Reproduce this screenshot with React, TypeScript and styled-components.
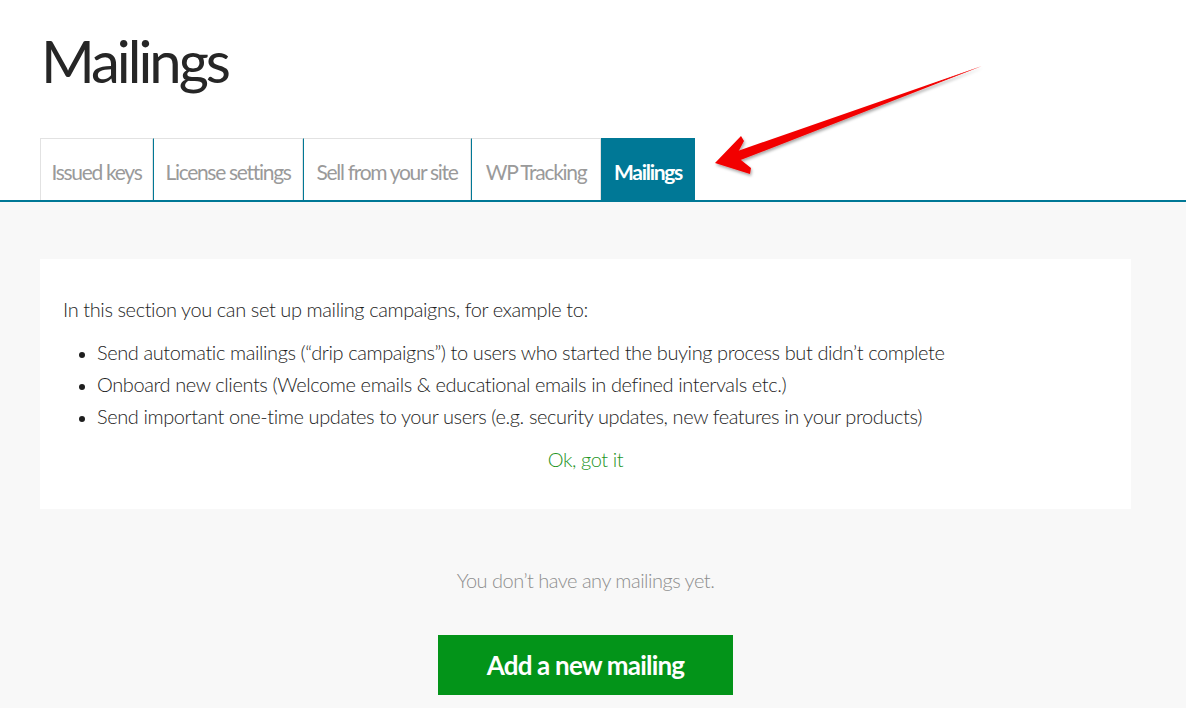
import React from "react";
import styled, { createGlobalStyle } from "styled-components";

const Global = createGlobalStyle`
  html, body { margin: 0; padding: 0; background: #ffffff; }
  body { font-family: Lato, "Open Sans", sans-serif; color: #222; }
  * { box-sizing: border-box; }
`;

const Page = styled.div`
  position: relative;
  width: 1186px;
  min-height: 708px;
  overflow: hidden;
`;

const Header = styled.header`
  padding: 23px 0 0 41px;
  height: 138px;
`;

const Title = styled.h1`
  margin: 0;
  font-size: 58px;
  font-weight: 400;
  letter-spacing: -3px;
  line-height: 76px;
  color: #262626;
`;

const TabBar = styled.nav`
  display: flex;
  padding-left: 40px;
  border-bottom: 2px solid #007896;
`;

const Tab = styled.div<{ $active?: boolean; $w: number }>`
  height: 62px;
  display: flex;
  align-items: center;
  justify-content: center;
  padding-top: 3px;
  width: ${(p) => p.$w}px;
  font-size: 21px;
  letter-spacing: -1.3px;
  font-weight: ${(p) => (p.$active ? 700 : 400)};
  color: ${(p) => (p.$active ? "#ffffff" : "#9a9a9a")};
  background: ${(p) => (p.$active ? "#007896" : "#ffffff")};
  border: 1px solid ${(p) => (p.$active ? "#007896" : "#e2e2e2")};
  border-bottom: none;
  & + & { border-left: ${(p) => (p.$active ? "1px solid #007896" : "none")}; }
`;

const Main = styled.main`
  background: #f8f8f8;
  padding: 57px 55px 20px 40px;
  min-height: 506px;
`;

const InfoCard = styled.section`
  background: #ffffff;
  height: 250px;
  padding: 37px 23px 0 23px;
  font-size: 20px;
  font-weight: 300;
  letter-spacing: -0.4px;
  color: #1e1e1e;
`;

const Intro = styled.p`
  margin: 0 0 14px 0;
  line-height: 26px;
`;

const List = styled.ul`
  margin: 0;
  padding-left: 34px;
  & li { line-height: 32px; }
  & li::marker { font-size: 17px; }
`;

const Dismiss = styled.div`
  margin-top: 15px;
  text-align: center;
  color: #1f951f;
  font-size: 20px;
`;

const Empty = styled.p`
  margin: 59px 0 0;
  text-align: center;
  color: #8e8e8e;
  font-size: 20px;
  font-weight: 300;
  letter-spacing: -0.5px;
`;

const ButtonRow = styled.div`
  display: flex;
  justify-content: center;
  margin-top: 43px;
`;

const AddButton = styled.button`
  width: 295px;
  height: 60px;
  border: none;
  background: #039419;
  color: #ffffff;
  font-family: inherit;
  font-size: 26px;
  font-weight: 700;
  letter-spacing: -0.8px;
  cursor: pointer;
`;

const Arrow = styled.svg`
  position: absolute;
  left: 700px;
  top: 55px;
  pointer-events: none;
`;

const tabs = [
  { label: "Issued keys", w: 113 },
  { label: "License settings", w: 150 },
  { label: "Sell from your site", w: 168 },
  { label: "WP Tracking", w: 130 },
  { label: "Mailings", w: 94, active: true },
];

export default function App() {
  return (
    <Page>
      <Global />
      <Header>
        <Title>Mailings</Title>
      </Header>
      <TabBar>
        {tabs.map((t) => (
          <Tab key={t.label} $active={t.active} $w={t.w}>
            {t.label}
          </Tab>
        ))}
      </TabBar>
      <Main>
        <InfoCard>
          <Intro>In this section you can set up mailing campaigns, for example to:</Intro>
          <List>
            <li>Send automatic mailings (“drip campaigns”) to users who started the buying process but didn’t complete</li>
            <li>Onboard new clients (Welcome emails &amp; educational emails in defined intervals etc.)</li>
            <li>Send important one-time updates to your users (e.g. security updates, new features in your products)</li>
          </List>
          <Dismiss>Ok, got it</Dismiss>
        </InfoCard>
        <Empty>You don’t have any mailings yet.</Empty>
        <ButtonRow>
          <AddButton>Add a new mailing</AddButton>
        </ButtonRow>
      </Main>
      <Arrow width="300" height="130" viewBox="0 0 300 130">
        <defs>
          <filter id="sh" x="-10%" y="-10%" width="120%" height="140%">
            <feDropShadow dx="1" dy="2" stdDeviation="1.5" floodColor="#000" floodOpacity="0.35" />
          </filter>
        </defs>
        <g filter="url(#sh)">
          <path d="M282 11 L36 103 L32 98 Z" fill="#f20000" />
          <path d="M282 11 L38 106 L36 100 Z" fill="#f20000" />
          <path d="M15 108 L41 81 L44 86 L36 101 L51 113 L50 119 Z" fill="#f20000" />
        </g>
      </Arrow>
    </Page>
  );
}
